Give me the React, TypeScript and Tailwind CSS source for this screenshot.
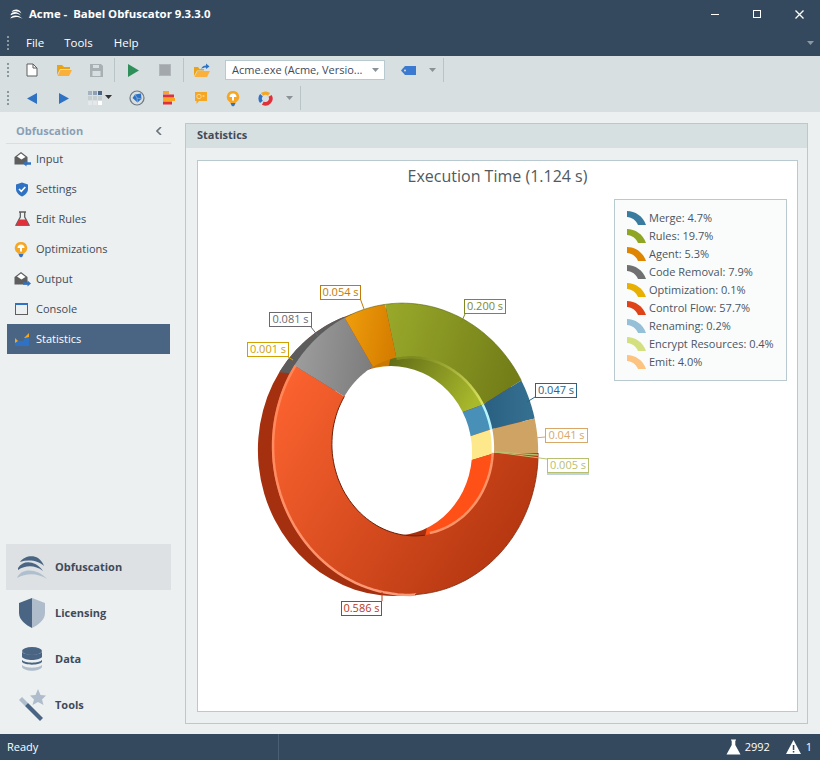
import type { ReactNode } from "react";

type Ell = { cx: number; cy: number; a: number; b: number };
type P = [number, number];

const TILT = (-6 * Math.PI) / 180;
const FRONT: Ell = { cx: 405, cy: 449, a: 133, b: 146 };
const HOLE: Ell = { cx: 413, cy: 446, a: 81, b: 90 };
const BACK: Ell = { cx: 392, cy: 452, a: 134, b: 144 };
const BACK_HOLE: Ell = { cx: 392, cy: 451, a: 80, b: 85 };

function pt(e: Ell, t: number): P {
    const x = e.a * Math.cos(t);
    const y = e.b * Math.sin(t);
    return [e.cx + x * Math.cos(TILT) - y * Math.sin(TILT), e.cy + x * Math.sin(TILT) + y * Math.cos(TILT)];
}

function tOf(e: Ell, [px, py]: P): number {
    const dx = px - e.cx;
    const dy = py - e.cy;
    const x = dx * Math.cos(TILT) + dy * Math.sin(TILT);
    const y = -dx * Math.sin(TILT) + dy * Math.cos(TILT);
    return Math.atan2(y / e.b, x / e.a);
}

function arc(e: Ell, from: P, to: P): P[] {
    const t0 = tOf(e, from);
    let t1 = tOf(e, to);
    if (t1 < t0) t1 += Math.PI * 2;
    const out: P[] = [];
    for (let i = 0; i <= 48; i++) out.push(pt(e, t0 + ((t1 - t0) * i) / 48));
    return out;
}

const poly = (points: P[], close = true) =>
    "M" + points.map(([x, y]) => `${x.toFixed(1)} ${y.toFixed(1)}`).join("L") + (close ? "Z" : "");

const sector = (o0: P, i0: P, o1: P, i1: P) => poly([...arc(FRONT, o0, o1), ...arc(HOLE, i0, i1).reverse()]);

const B = {
    orangeGreen: [[385, 303], [396, 356]],
    greenBlue: [[517, 383], [482, 405]],
    blueTan: [[532, 419], [492, 429]],
    tanRed: [[538, 453], [495, 453]],
    redGray: [[290, 362], [341, 394]],
    grayOrange: [[343, 314], [371, 363]],
} as Record<string, [P, P]>;

const seg = (a: [P, P], b: [P, P]) => sector(a[0], a[1], b[0], b[1]);

const labels = [
    { x: 320, y: 285, w: 40, text: "0.054 s", color: "#c47a08", line: "M360 298L364 309" },
    { x: 464, y: 299, w: 41, text: "0.200 s", color: "#7f8a1e", line: "M465 314L461 323" },
    { x: 269, y: 312, w: 42, text: "0.081 s", color: "#6a6a6e", line: "M311 327L318 336" },
    { x: 247, y: 342, w: 41, text: "0.001 s", color: "#d0a000", line: "M288 357L293 360" },
    { x: 535, y: 383, w: 41, text: "0.047 s", color: "#2a6488", line: "M535 397L527 402" },
    { x: 545, y: 428, w: 42, text: "0.041 s", color: "#d8a868", line: "M545 437L535 438" },
    { x: 547, y: 458, w: 41, text: "0.005 s", color: "#b8c070", line: "M547 459L495 452" },
    { x: 341, y: 601, w: 40, text: "0.586 s", color: "#b83a18", line: "M382 601L382 592" },
];

const legend = [
    ["Merge: 4.7%", "#3a7ba0"],
    ["Rules: 19.7%", "#8fa624"],
    ["Agent: 5.3%", "#df8600"],
    ["Code Removal: 7.9%", "#707070"],
    ["Optimization: 0.1%", "#e8b000"],
    ["Control Flow: 57.7%", "#df4318"],
    ["Renaming: 0.2%", "#96c0d8"],
    ["Encrypt Resources: 0.4%", "#d4e080"],
    ["Emit: 4.0%", "#fcc480"],
];

function Grad({ id, x1, y1, x2, y2, from, to }: { id: string; x1: number; y1: number; x2: number; y2: number; from: string; to: string }) {
    return (
        <linearGradient id={id} gradientUnits="userSpaceOnUse" x1={x1} y1={y1} x2={x2} y2={y2}>
            <stop offset="0" stopColor={from} />
            <stop offset="1" stopColor={to} />
        </linearGradient>
    );
}

function Donut() {
    return (
        <svg viewBox="198 161 600 550" className="block h-[550px] w-[600px]">
            <defs>
                <Grad id="red" x1={272} y1={370} x2={530} y2={540} from="#ff6531" to="#b2350f" />
                <Grad id="green" x1={385} y1={320} x2={517} y2={360} from="#98a82a" to="#737e18" />
                <Grad id="orange" x1={345} y1={320} x2={395} y2={330} from="#ef9d0c" to="#d67e00" />
                <Grad id="gray" x1={300} y1={340} x2={375} y2={350} from="#9c9c9c" to="#7c7c7c" />
                <Grad id="blue" x1={490} y1={400} x2={530} y2={400} from="#2b6284" to="#356f90" />
                <Grad id="wall" x1={385} y1={360} x2={470} y2={410} from="#5f6a16" to="#a9b92c" />
                <Grad id="edge" x1={275} y1={380} x2={400} y2={594} from="#ff8658" to="#ff9a78" />
                <Grad id="stripe" x1={420} y1={356} x2={495} y2={420} from="#7e8c20" to="#f4fb70" />
                <clipPath id="inner">
                    <ellipse cx={HOLE.cx} cy={HOLE.cy} rx={HOLE.a + 1} ry={HOLE.b + 1} transform={`rotate(-6 ${HOLE.cx} ${HOLE.cy})`} />
                </clipPath>
            </defs>

            <ellipse cx={BACK.cx} cy={BACK.cy} rx={BACK.a} ry={BACK.b} transform={`rotate(-6 ${BACK.cx} ${BACK.cy})`} fill="#a5300f" />
            <path d={poly([...arc(BACK, [279, 372], [345, 318]), [360, 380]])} fill="#5c5c5c" />

            <g clipPath="url(#inner)">
                <polygon points="440,425 460,413 482,405 510,395 510,340 380,340 375,372" fill="url(#wall)" />
                <polygon points="372,372 366,350 392,350 388,370" fill="#c87800" />
                <polygon points="440,425 460,413 482,405 510,395 510,425 492,429 468,437 440,443" fill="#4890b8" />
                <polygon points="440,443 468,437 492,429 510,425 510,452 495,453 472,460 440,465" fill="#fee88c" />
                <polygon points="440,465 472,460 495,453 510,452 510,560 400,560 425,537" fill="#ff5018" />
            </g>
            <path d={poly(arc(HOLE, [396, 356], B.greenBlue[1]), false)} fill="none" stroke="url(#stripe)" strokeWidth={5} />
            <path d={poly(arc(HOLE, B.greenBlue[1], B.blueTan[1]), false)} fill="none" stroke="#b8f4ff" strokeWidth={5} />
            <path d={poly(arc(HOLE, B.blueTan[1], B.tanRed[1]), false)} fill="none" stroke="#ffffff" strokeWidth={5} />
            <path d={poly(arc(HOLE, B.tanRed[1], [430, 534]), false)} fill="none" stroke="#ff9468" strokeWidth={5} />

            <ellipse cx={BACK_HOLE.cx} cy={BACK_HOLE.cy} rx={BACK_HOLE.a} ry={BACK_HOLE.b} transform={`rotate(-6 ${BACK_HOLE.cx} ${BACK_HOLE.cy})`} fill="#ffffff" />

            <path d={seg(B.tanRed, B.redGray)} fill="url(#red)" />
            <path d={seg(B.redGray, B.grayOrange)} fill="url(#gray)" />
            <path d={seg(B.grayOrange, B.orangeGreen)} fill="url(#orange)" />
            <path d={seg(B.orangeGreen, B.greenBlue)} fill="url(#green)" />
            <path d={seg(B.greenBlue, B.blueTan)} fill="url(#blue)" />
            <path d={seg(B.blueTan, B.tanRed)} fill="#cfa363" />

            <path d={poly(arc(FRONT, [415, 594], B.redGray[0]), false)} fill="none" stroke="url(#edge)" strokeWidth={2.5} transform="translate(1.2 0)" />
            <path d={poly(arc(FRONT, B.tanRed[0], [415, 594]), false)} fill="none" stroke="#7a2408" strokeWidth={0.8} />
            <path d={poly(arc(FRONT, B.grayOrange[0], B.greenBlue[0]), false)} fill="none" stroke="#5e6614" strokeWidth={0.6} />
            <path d={poly(arc(HOLE, [425, 536], B.redGray[1]), false)} fill="none" stroke="#6e2008" strokeWidth={1} />
            <path d="M495 452L538 455" stroke="#b8c070" strokeWidth={1.4} />

            {labels.map((l) => (
                <g key={l.text}>
                    <path d={l.line} stroke={l.color} fill="none" />
                    <rect x={l.x + 0.5} y={l.y + 0.5} width={l.w} height={14} fill="#ffffff" stroke={l.color} />
                    <text x={l.x + l.w / 2 + 0.5} y={l.y + 11} textAnchor="middle" fontSize={11} fill={l.color}>
                        {l.text}
                    </text>
                </g>
            ))}
            <path d="M547 474H589" stroke="#80a8c0" />
        </svg>
    );
}

function LegendMark({ color }: { color: string }) {
    return (
        <svg width="19" height="14" viewBox="0 0 19 14" className="shrink-0">
            <path d="M0 0C8 0 16 5 19 14H11C9 9 5 6.5 0 6Z" fill={color} />
        </svg>
    );
}

function Icon({ w = 16, h = 16, children }: { w?: number; h?: number; children: ReactNode }) {
    return (
        <svg width={w} height={h} viewBox={`0 0 ${w} ${h}`} className="shrink-0">
            {children}
        </svg>
    );
}

const Logo = ({ light }: { light?: boolean }) => (
    <svg width="30" height="24" viewBox="0 0 30 24" className={light ? "h-[10px] w-[13px]" : ""}>
        <path d="M3 7C7 1 16 0 21 3C24 5 26 8 27 11C22 6 12 4 3 7Z" fill={light ? "#fff" : "#4a6583"} />
        <path d="M1 13C6 5 18 5 26 16C18 10 9 10 1 15Z" fill={light ? "#fff" : "#4a6583"} />
        <path d="M0 23C4 13 20 13 30 24C20 18 10 18 0 23Z" fill={light ? "#fff" : "#b0bfcf"} />
    </svg>
);

const Arrow = ({ color = "#8a9298" }: { color?: string }) => (
    <svg width="7" height="4" viewBox="0 0 7 4">
        <path d="M0 0H7L3.5 4Z" fill={color} />
    </svg>
);

const Grip = () => (
    <div className="flex w-[4px] flex-col gap-[2px]">
        {[0, 1, 2, 3].map((i) => (
            <span key={i} className="block h-[2px] w-[2px] bg-[#8b979f]" />
        ))}
    </div>
);

const Sep = () => <div className="mx-[2px] h-[24px] w-px bg-[#b9c4c8]" />;

function Tool({ w = "w-[32px]", children }: { w?: string; children: ReactNode }) {
    return <div className={`flex h-full items-center justify-center ${w}`}>{children}</div>;
}

const Envelope = ({ dir }: { dir: "in" | "out" }) => (
    <Icon w={17}>
        <path d="M0.5 6L7 1L13.500 6V13.500H0.5Z" fill="#5e5e5e" />
        <path d="M3 5.500L7 2.500L11.500 6L7.500 8.500Z" fill="#ffffff" />
        {dir === "in" ? (
            <path d="M9 12.500L12.500 9.500V11.300H17V13.700H12.500V15.500Z" fill="#2f72c4" />
        ) : (
            <path d="M17 12.500L13.500 9.500V11.300H9V13.700H13.500V15.500Z" fill="#2f72c4" />
        )}
    </Icon>
);

const Bulb = () => (
    <Icon w={14} h={17}>
        <path d="M7 1A6 6 0 0 1 10.5 12L9.5 13H4.5L3.5 12A6 6 0 0 1 7 1Z" fill="#f5a623" />
        <path d="M3.500 7A3.500 3.500 0 0 1 10.500 7H8V10.500H6V7Z" fill="#ffffff" />
        <path d="M4.5 13H9.5L8.5 15.5L7 16.5L5.5 15.5Z" fill="#3b70b8" />
    </Icon>
);

const navItems: { label: string; icon: ReactNode; active?: boolean }[] = [
    { label: "Input", icon: <Envelope dir="in" /> },
    {
        label: "Settings",
        icon: (
            <Icon w={17}>
                <path d="M8 1.5L14 3.5V8C14 11.5 11 14 8 15.5C5 14 2 11.5 2 8V3.5Z" fill="#2f72c4" />
                <path d="M5 8L7.3 10.3L11.3 6" stroke="#fff" strokeWidth={1.6} fill="none" />
            </Icon>
        ),
    },
    {
        label: "Edit Rules",
        icon: (
            <Icon w={17}>
                <path d="M5 1H12M6.300 1V6L2 14H15L10.700 6V1" fill="none" stroke="#5e5e5e" strokeWidth={1.3} />
                <path d="M5 8.5H12L15 14.8H2Z" fill="#e0313a" />
            </Icon>
        ),
    },
    { label: "Optimizations", icon: <Bulb /> },
    { label: "Output", icon: <Envelope dir="out" /> },
    {
        label: "Console",
        icon: (
            <Icon w={16}>
                <rect x="1.5" y="2.5" width="12" height="11" fill="none" stroke="#5e5e5e" />
                <rect x="1" y="2" width="13" height="2" fill="#2f72c4" />
            </Icon>
        ),
    },
    {
        label: "Statistics",
        active: true,
        icon: (
            <Icon w={16}>
                <path d="M1 15V12L4 10H9L11 7L15 6V15Z" fill="#2f72c4" />
                <path d="M10 7L15 2V6L11 7Z" fill="#f5a623" />
                <path d="M1 7L4 10L1 12Z" fill="#f5a623" />
            </Icon>
        ),
    },
];

const bottomItems: { label: string; icon: ReactNode; active?: boolean }[] = [
    { label: "Obfuscation", active: true, icon: <Logo /> },
    {
        label: "Licensing",
        icon: (
            <svg width="26" height="30" viewBox="0 0 26 30">
                <path d="M13 0L0 5V15C0 22 7 27 13 30Z" fill="#4a6583" />
                <path d="M13 0L26 5V15C26 22 19 27 13 30Z" fill="#aebccb" />
            </svg>
        ),
    },
    {
        label: "Data",
        icon: (
            <svg width="20" height="24" viewBox="0 0 20 24">
                <ellipse cx="10" cy="4" rx="10" ry="4" fill="#4a6583" />
                <path d="M0 5C3 8.5 17 8.5 20 5V9C17 13 3 13 0 9Z" fill="#4a6583" />
                <path d="M0 7V10C3 14 17 14 20 10V7C17 10.500 3 10.500 0 7Z" fill="#4a6583" />
                <path d="M0 13C3 16.500 17 16.500 20 13V15C17 18.500 3 18.500 0 15Z" fill="#4a6583" />
                <path d="M0 18C3 21.500 17 21.500 20 18V20C17 25 3 25 0 20Z" fill="#aebccb" />
            </svg>
        ),
    },
    {
        label: "Tools",
        icon: (
            <svg width="28" height="32" viewBox="0 0 28 32">
                <path d="M20 0L22.500 6L28 6.500L24 10.500L25.500 16L20 13L14.500 16L16 10.500L12 6.500L17.500 6Z" fill="#aebccb" />
                <path d="M1 11L4 8L10 14L7 17Z" fill="#aebccb" />
                <path d="M7 17L10 14L25 29L22 32Z" fill="#4a6583" />
            </svg>
        ),
    },
];

export default function App() {
    return (
        <div className="flex h-[760px] w-[820px] flex-col bg-[#ecf0f1] font-['Open_Sans',sans-serif] text-[11px] text-[#3f4a5a]">
            <header className="bg-[#34495e] text-white">
                <div className="flex h-[28px] items-center pl-[10px]">
                    <Logo light />
                    <span className="ml-[6px] text-[11.4px] font-bold whitespace-pre">Acme -  Babel Obfuscator 9.3.3.0</span>
                    <div className="ml-auto flex items-center">
                        <div className="flex w-[42px] justify-center"><div className="mt-[1px] h-px w-[8px] bg-white" /></div>
                        <div className="flex w-[42px] justify-center"><div className="h-[8px] w-[8px] border border-white" /></div>
                        <div className="flex w-[42px] justify-center">
                            <svg width="9" height="9" viewBox="0 0 9 9"><path d="M0.500 0.500L8.500 8.500M8.500 0.500L0.500 8.500" stroke="#fff" strokeWidth={1.3} /></svg>
                        </div>
                    </div>
                </div>
                <div className="flex h-[28px] items-center pt-[2px] pl-[7px] text-[11.5px]">
                    <Grip />
                    <span className="ml-[15px]">File</span>
                    <span className="ml-[20px]">Tools</span>
                    <span className="ml-[21px]">Help</span>
                    <div className="mr-[6px] ml-auto flex"><Arrow color="#8c99a5" /></div>
                </div>
            </header>

            <div className="h-[56px] bg-[#d7dfe1]">
                <div className="flex h-[28px] items-center pl-[7px]">
                    <Grip />
                    <div className="flex h-full w-[5px]" />
                    <Tool>
                        <Icon w={12} h={14}>
                            <path d="M1 1H7L11 5V13H1Z" fill="#fff" stroke="#5e5e5e" />
                            <path d="M7 1V5H11" fill="none" stroke="#5e5e5e" />
                        </Icon>
                    </Tool>
                    <Tool>
                        <Icon w={15} h={13}>
                            <path d="M0 1H5L7 3H13V5H3L0 11Z" fill="#e8a317" />
                            <path d="M3.500 6H15L12 12H0.500Z" fill="#fbb03b" />
                        </Icon>
                    </Tool>
                    <Tool>
                        <Icon w={13} h={13}>
                            <path d="M0 0H11L13 2V13H0Z" fill="#a9b0b4" />
                            <rect x="3" y="1" width="6" height="3" fill="#d7dfe1" />
                            <rect x="2.500" y="7" width="8" height="5" fill="#d7dfe1" />
                        </Icon>
                    </Tool>
                    <Sep />
                    <Tool>
                        <Icon w={11} h={13}>
                            <path d="M0 0L11 6.500L0 13Z" fill="#2f8f5b" />
                        </Icon>
                    </Tool>
                    <Tool>
                        <div className="h-[12px] w-[12px] border border-[#b0b6b9] bg-[#a2a8ab]" />
                    </Tool>
                    <Sep />
                    <Tool>
                        <Icon w={16} h={15}>
                            <path d="M0 4H4L5.500 6H10V7.500H3L0 13Z" fill="#e8a317" />
                            <path d="M3.500 8H16L13 14H0.500Z" fill="#fbb03b" />
                            <path d="M7 6C8 3.500 10 2.500 12 2.500V0.500L15.500 3.500L12 6V4.500C10 4.500 8.500 5 7 6Z" fill="#2f72c4" />
                        </Icon>
                    </Tool>
                    <div className="ml-[7px] flex h-[20px] w-[160px] items-center border border-[#b8cad0] bg-white pl-[6px] text-[#3f4a5a]">
                        <span>Acme.exe (Acme, Versio...</span>
                        <div className="mr-[5px] ml-auto flex"><Arrow /></div>
                    </div>
                    <div className="ml-[7px]" />
                    <Tool>
                        <Icon w={15} h={9}>
                            <path d="M4 0H15V9H4L0 4.500Z" fill="#3b7ad0" />
                            <circle cx="4" cy="4.500" r="1" fill="#d7dfe1" />
                        </Icon>
                    </Tool>
                    <Tool w="w-[17px]"><Arrow /></Tool>
                    <Sep />
                </div>
                <div className="flex h-[28px] items-center pl-[7px]">
                    <Grip />
                    <div className="flex h-full w-[5px]" />
                    <Tool>
                        <Icon w={10} h={11}><path d="M10 0V11L0 5.500Z" fill="#2f72c4" /></Icon>
                    </Tool>
                    <Tool>
                        <Icon w={10} h={11}><path d="M0 0V11L10 5.500Z" fill="#2f72c4" /></Icon>
                    </Tool>
                    <Tool w="w-[40px]">
                        <div className="grid grid-cols-3 gap-px">
                            {["#a4b2c2", "#8da0b5", "#4a6583", "#c6ced2", "#c6ced2", "#c6ced2", "#e4e8ea", "#e4e8ea", "#ffffff"].map((c, i) => (
                                <span key={i} style={{ background: c }} className="block h-[4px] w-[4px]" />
                            ))}
                        </div>
                        <div className="mb-[2px] ml-[3px] flex"><Arrow color="#333" /></div>
                    </Tool>
                    <div className="w-px" />
                    <Tool>
                        <Icon w={16} h={16}>
                            <circle cx="8" cy="8" r="7" fill="none" stroke="#6e7880" strokeWidth={1.2} />
                            <path d="M3.500 8L6 4.500L12 3.500L12.500 9L8.500 12.500Z" fill="#2f72c4" />
                            <path d="M6 4.500L8 8L12.500 9M8 8L8.500 12.500" stroke="#a5c4ea" strokeWidth={0.6} fill="none" />
                        </Icon>
                    </Tool>
                    <Tool>
                        <Icon w={12} h={14}>
                            <rect x="0" y="0" width="6" height="3" fill="#f5a623" />
                            <rect x="0" y="3.500" width="11" height="3" fill="#e0313a" />
                            <rect x="0" y="7" width="12" height="3" fill="#f5a623" />
                            <rect x="0" y="10.500" width="9" height="3" fill="#e0313a" />
                        </Icon>
                    </Tool>
                    <Tool>
                        <Icon w={12} h={13}>
                            <path d="M0 0H12V9H4L1.500 12V9H0Z" fill="#f5a623" />
                            <circle cx="4" cy="4.500" r="2.200" fill="none" stroke="#ffd48a" />
                            <circle cx="8.500" cy="4" r="1" fill="#ffd48a" />
                        </Icon>
                    </Tool>
                    <Tool><Bulb /></Tool>
                    <Tool>
                        <Icon w={15} h={15}>
                            <path d="M4.090 3.440A5.300 5.300 0 0 1 10.910 3.440" fill="none" stroke="#f5a623" strokeWidth={3.600} />
                            <path d="M12.090 4.850A5.300 5.300 0 0 1 4.850 12.090" fill="none" stroke="#e0313a" strokeWidth={3.600} />
                            <path d="M3.440 10.910A5.300 5.300 0 0 1 3.440 4.090" fill="none" stroke="#2f72c4" strokeWidth={3.600} />
                        </Icon>
                    </Tool>
                    <Tool w="w-[17px]"><Arrow /></Tool>
                    <Sep />
                </div>
            </div>

            <main className="flex min-h-0 flex-1">
                <aside className="flex w-[178px] flex-col justify-between pb-[6px]">
                    <div className="pt-[12px] pl-[6px]">
                        <div className="mr-[7px] flex h-[20px] items-center justify-between border-b border-[#d7dfe1] pr-[9px] pb-[6px] pl-[10px] font-bold text-[#8a9fb5]">
                            <span className="mt-[1px]">Obfuscation</span>
                            <svg width="6" height="8" viewBox="0 0 6 8" className="mt-[1px]"><path d="M5 0L1 4L5 8" fill="none" stroke="#6a747c" strokeWidth={1.6} /></svg>
                        </div>
                        <nav className="pl-px">
                            {navItems.map((item) => (
                                <div key={item.label} className={`flex h-[30px] w-[163px] items-center ${item.active ? "bg-[#4a6583] text-white" : ""}`}>
                                    <div className="ml-[7px] flex w-[22px]">{item.icon}</div>
                                    <span>{item.label}</span>
                                </div>
                            ))}
                        </nav>
                    </div>
                    <nav className="pl-[6px]">
                        {bottomItems.map((item) => (
                            <div key={item.label} className={`flex h-[46px] w-[165px] items-center font-bold ${item.active ? "bg-[#dde1e3]" : ""}`}>
                                <div className="flex w-[49px] justify-center pl-[2px]">{item.icon}</div>
                                <span>{item.label}</span>
                            </div>
                        ))}
                    </nav>
                </aside>

                <section className="mt-[11px] mb-[10px] ml-[7px] flex w-[623px] flex-col border border-[#b8cad0]">
                    <div className="flex h-[24px] items-center bg-[#d7e0e0] pb-[2px] pl-[11px] font-bold">Statistics</div>
                    <div className="relative mx-[11px] mt-[12px] h-[552px] w-[601px] border border-[#b8cad0] bg-white">
                        <h2 className="absolute top-[3px] left-0 w-full text-center text-[16px] font-normal text-[#505a60]">Execution Time (1.124 s)</h2>
                        <Donut />
                        <div className="absolute top-[38px] left-[416px] flex h-[182px] w-[173px] flex-col border border-[#b8cad0] bg-[#fafcfc] pt-[9px] pl-[12px]">
                            {legend.map(([name, color]) => (
                                <div key={name} className="flex h-[18px] items-center gap-[3px] whitespace-nowrap text-[#4a5563]">
                                    <LegendMark color={color} />
                                    <span>{name}</span>
                                </div>
                            ))}
                        </div>
                    </div>
                </section>
            </main>

            <footer className="flex h-[26px] items-center bg-[#34495e] pl-[7px] text-[11px] text-white">
                <span className="w-[272px] border-r border-[#4a5f74] leading-[26px]">Ready</span>
                <div className="ml-auto flex items-center">
                    <svg width="15" height="16" viewBox="0 0 15 16"><path d="M5 0.500H10V1.500H9.300V6L14.500 15.500H0.500L5.700 6V1.500H5Z" fill="#fff" /></svg>
                    <span className="ml-[4px] w-[41px]">2992</span>
                    <svg width="15" height="14" viewBox="0 0 15 14"><path d="M7.500 0L15 14H0Z" fill="#fff" /><rect x="6.800" y="5" width="1.500" height="5" fill="#34495e" /><rect x="6.800" y="11" width="1.500" height="1.500" fill="#34495e" /></svg>
                    <span className="mr-[8px] ml-[5px]">1</span>
                </div>
            </footer>
        </div>
    );
}
